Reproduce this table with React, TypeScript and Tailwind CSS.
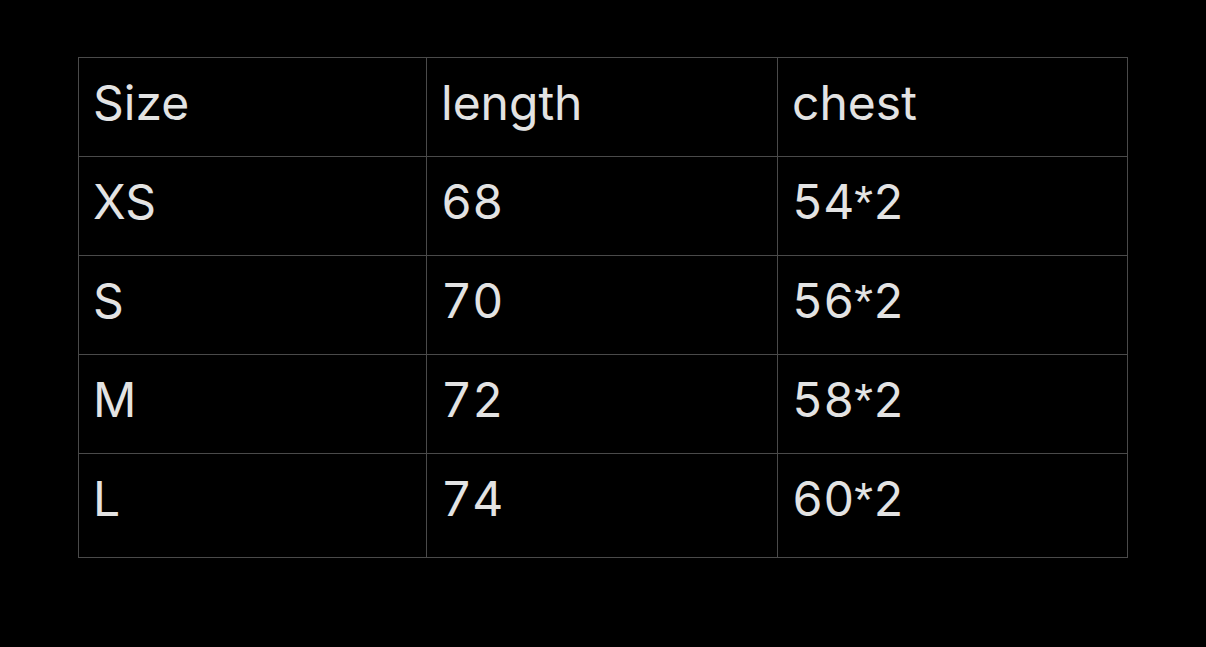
import React from "react";

const rows = [
  ["Size", "length", "chest"],
  ["XS", "68", "54*2"],
  ["S", "70", "56*2"],
  ["M", "72", "58*2"],
  ["L", "74", "60*2"],
];

function Cell({ text }: { text: string }) {
  const parts = text.split("*");
  if (parts.length === 1) return <>{text}</>;
  return (
    <>
      {parts[0]}
      <span className="font-['Liberation_Sans',sans-serif]">*</span>
      {parts[1]}
    </>
  );
}

export default function App() {
  return (
    <div className="w-[1206px] h-[647px] bg-black pt-[57px] pl-[78px] font-['Inter','Liberation_Sans',sans-serif]">
      <div className="grid grid-cols-[348px_351px_350px] w-[1050px] border-l border-t border-[#4a4a4a]">
        {rows.map((r, i) =>
          r.map((c, j) => (
            <div
              key={`${i}-${j}`}
              className={
                i === rows.length - 1
                  ? "h-[104px] border-r border-b border-[#4a4a4a] pl-[14px] pt-[21px] text-[48px] leading-none text-[#e3e3e3] tabular-nums"
                  : "h-[99px] border-r border-b border-[#4a4a4a] pl-[14px] pt-[21px] text-[48px] leading-none text-[#e3e3e3] tabular-nums"
              }
            >
              <Cell text={c} />
            </div>
          ))
        )}
      </div>
    </div>
  );
}
